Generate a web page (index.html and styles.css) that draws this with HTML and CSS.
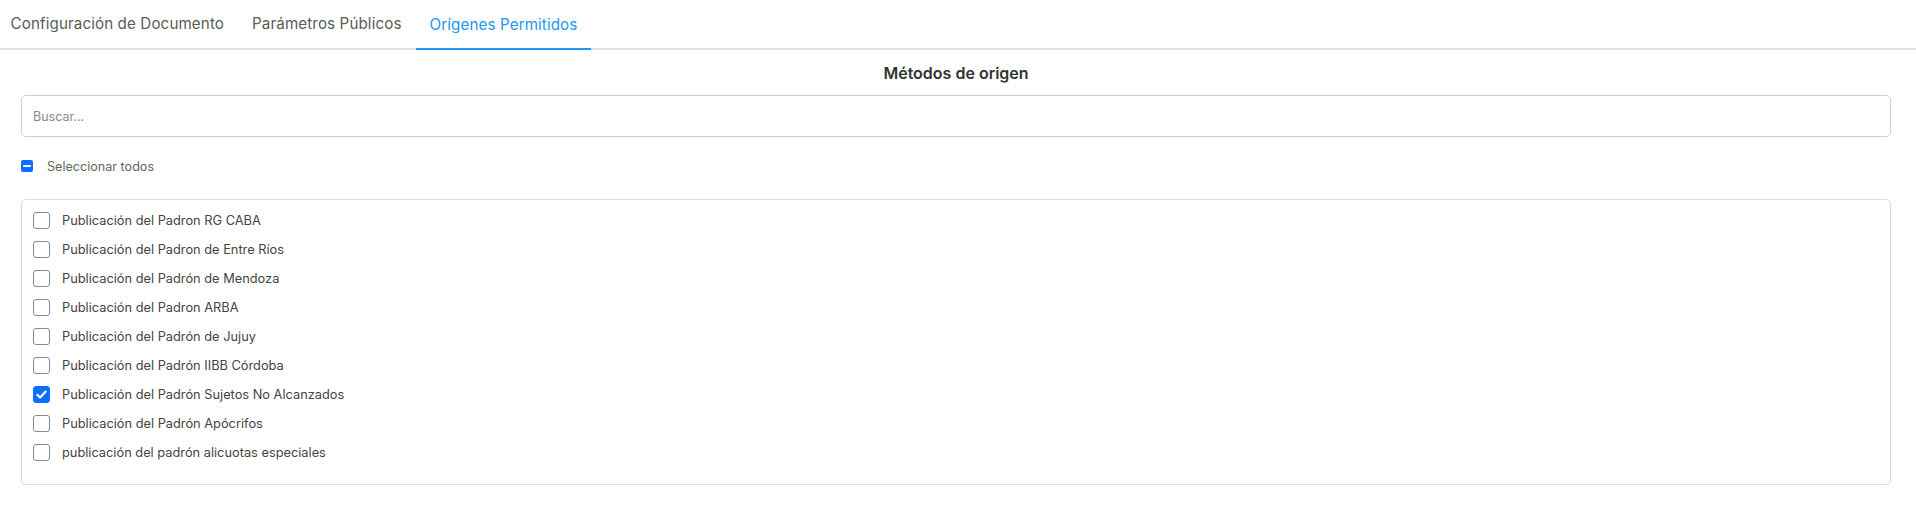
FILE: index.html
```html
<!DOCTYPE html>
<html lang="es">
<head>
<meta charset="utf-8">
<title>Orígenes Permitidos</title>
<link rel="stylesheet" href="styles.css">
</head>
<body>
<nav class="tabs">
  <a class="tab">Configuración de Documento</a>
  <a class="tab">Parámetros Públicos</a>
  <a class="tab active">Orígenes Permitidos</a>
</nav>
<main class="content">
  <h2 class="title">Métodos de origen</h2>
  <div class="search"><input class="search-input" type="text" placeholder="Buscar..."></div>
  <label class="select-all">
    <span class="mini-box"><span class="dash"></span></span>
    <span class="select-all-text">Seleccionar todos</span>
  </label>
  <div class="list">
    <label class="item"><span class="box"></span><span class="item-text">Publicación del Padron RG CABA</span></label>
    <label class="item"><span class="box"></span><span class="item-text">Publicación del Padron de Entre Ríos</span></label>
    <label class="item"><span class="box"></span><span class="item-text">Publicación del Padrón de Mendoza</span></label>
    <label class="item"><span class="box"></span><span class="item-text">Publicación del Padron ARBA</span></label>
    <label class="item"><span class="box"></span><span class="item-text">Publicación del Padrón de Jujuy</span></label>
    <label class="item"><span class="box"></span><span class="item-text">Publicación del Padrón IIBB Córdoba</span></label>
    <label class="item"><span class="box checked"><svg viewBox="0 0 16 16" width="13" height="13"><path d="M2.8 8.4 L6.3 11.8 L13.2 4.4" fill="none" stroke="#fff" stroke-width="2.6" stroke-linecap="round" stroke-linejoin="round"/></svg></span><span class="item-text">Publicación del Padrón Sujetos No Alcanzados</span></label>
    <label class="item"><span class="box"></span><span class="item-text">Publicación del Padrón Apócrifos</span></label>
    <label class="item"><span class="box"></span><span class="item-text">publicación del padrón alicuotas especiales</span></label>
  </div>
</main>
</body>
</html>
```

FILE: styles.css
```css
* { box-sizing: border-box; }
html, body { margin: 0; padding: 0; background: #fff; }
body {
  font-family: Inter, "Noto Sans", "Liberation Sans", sans-serif;
  color: #444;
  width: 1916px;
}
.tabs {
  display: flex;
  border-bottom: 2px solid #dfe2e6;
  height: 50px;
  margin-left: -3.5px;
}
.tab {
  display: flex;
  align-items: center;
  padding: 0 14px 2px;
  height: 48px;
  font-size: 15.2px;
  color: #5b5b5b;
  letter-spacing: 0.1px;
}
.tab.active {
  color: #2196f3;
  border-bottom: 2px solid #2196f3;
  height: 50px;
  margin-bottom: -2px;
  padding-bottom: 0;
}
.content {
  padding: 0 25px 0 21px;
}
.title {
  margin: 13px 0 0;
  height: 20px;
  line-height: 20px;
  text-align: center;
  font-size: 16px;
  font-weight: 600;
  color: #333;
}
.search { margin-top: 12px; }
.search-input {
  display: block;
  width: 100%;
  height: 42px;
  border: 1px solid #cfcfcf;
  border-radius: 5px;
  padding: 0 11px;
  font-family: inherit;
  font-size: 12.5px;
  color: #444;
  outline: none;
}
.search-input::placeholder { color: #8a8a8a; }
.select-all {
  display: flex;
  align-items: center;
  height: 20px;
  margin-top: 19px;
  padding-left: 0;
}
.mini-box {
  width: 12px;
  height: 12px;
  border-radius: 2px;
  background: #0d6efd;
  display: flex;
  align-items: center;
  justify-content: center;
}
.dash { width: 8px; height: 2px; background: #fff; border-radius: 1px; }
.select-all-text {
  margin-left: 14px;
  font-size: 12.6px;
  color: #666;
}
.list {
  margin-top: 23px;
  border: 1px solid #dcdcdc;
  border-radius: 5px;
  padding: 6px 11px 17px;
  box-shadow: 0 1px 3px rgba(0,0,0,0.06);
}
.item {
  display: flex;
  align-items: center;
  height: 29px;
}
.box {
  width: 17px;
  height: 17px;
  border: 1.5px solid #8a8a8a;
  border-radius: 3px;
  display: flex;
  align-items: center;
  justify-content: center;
  flex: none;
}
.box.checked {
  background: #0d6efd;
  border-color: #0d6efd;
}
.item-text {
  margin-left: 12px;
  font-size: 12.8px;
  color: #444;
}
```
